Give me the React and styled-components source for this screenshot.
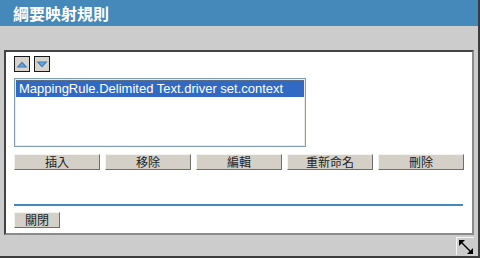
import React from "react";
import styled, { createGlobalStyle } from "styled-components";

const GlobalStyle = createGlobalStyle`
  html, body {
    margin: 0;
    padding: 0;
    background: #cccccc;
  }
  * {
    box-sizing: border-box;
  }
`;

const Window = styled.div`
  width: 480px;
  height: 258px;
  display: flex;
  flex-direction: column;
  background: #cccccc;
  border-right: 2px solid #3c3c3c;
  border-bottom: 2px solid #3c3c3c;
  font-family: "Liberation Sans", "Noto Sans CJK TC", sans-serif;
`;

const Header = styled.div`
  height: 26px;
  flex: none;
  background: #4589ba;
  color: #fff;
  font-family: "Noto Sans CJK TC", sans-serif;
  font-weight: bold;
  font-size: 16px;
  line-height: 26px;
  padding-left: 13px;
`;

const Body = styled.div`
  flex: 1;
  display: flex;
  flex-direction: column;
  padding: 24px 4px 0 4px;
`;

const Panel = styled.div`
  width: 470px;
  height: 185px;
  background: #fff;
  border-top: 2px solid #444;
  border-left: 2px solid #444;
  border-right: 2px solid #8a8a8a;
  border-bottom: 2px solid #8a8a8a;
  padding: 4px 8px 4px 8px;
  display: flex;
  flex-direction: column;
`;

const ArrowRow = styled.div`
  display: flex;
  gap: 4px;
`;

const ArrowButton = styled.div`
  width: 16px;
  height: 16px;
  border: 1px solid #1a1a1a;
  background: #d6d3cc;
  display: flex;
  align-items: center;
  justify-content: center;
`;

const ListBox = styled.div`
  margin-top: 6px;
  width: 292px;
  height: 69px;
  border: 1px solid #7f9db9;
  padding: 1px;
  box-shadow: inset 0 0 0 1px #ecebe6;
`;

const Option = styled.div`
  height: 17px;
  line-height: 16px;
  padding-left: 3px;
  font-size: 13px;
  color: ${(p) => (p.$selected ? "#fff" : "#000")};
  background: ${(p) => (p.$selected ? "#316ac5" : "transparent")};
  border-top: 1px solid ${(p) => (p.$selected ? "#5a6e88" : "transparent")};
  white-space: nowrap;
`;

const ButtonRow = styled.div`
  margin-top: 7px;
  display: flex;
  gap: 5px;
`;

const Button = styled.div`
  width: ${(p) => p.$width || 86}px;
  height: 16px;
  background: #d4d0c8;
  border-top: 1px solid #f4f3ee;
  border-left: 1px solid #f4f3ee;
  border-right: 1px solid #6e6e6e;
  border-bottom: 1px solid #6e6e6e;
  font-family: "Noto Sans CJK TC", sans-serif;
  font-size: 12px;
  line-height: 14px;
  color: #222;
  text-align: center;
`;

const Divider = styled.div`
  margin-top: 34px;
  width: 449px;
  height: 2px;
  background: #4589ba;
`;

const CloseRow = styled.div`
  margin-top: 6px;
  display: flex;
`;

const Footer = styled.div`
  display: flex;
  justify-content: flex-end;
  padding: 2px 0 0 0;
`;

const ResizeGrip = styled.div`
  width: 18px;
  height: 18px;
  border-top: 1px solid #f4f4f4;
  border-left: 1px solid #f4f4f4;
  display: flex;
  align-items: center;
  justify-content: center;
`;

const UpIcon = () => (
  <svg width="12" height="7" viewBox="0 0 12 7">
    <polygon points="6,0.5 11.5,6.5 0.5,6.5" fill="#3d7ab8" />
    <polygon points="6,2 9,5.5 3,5.5" fill="#6fa3d6" />
  </svg>
);

const DownIcon = () => (
  <svg width="12" height="7" viewBox="0 0 12 7">
    <polygon points="0.5,0.5 11.5,0.5 6,6.5" fill="#3d7ab8" />
    <polygon points="3,1.5 9,1.5 6,5" fill="#6fa3d6" />
  </svg>
);

const ResizeIcon = () => (
  <svg width="16" height="16" viewBox="0 0 16 16">
    <line x1="3" y1="3" x2="13" y2="13" stroke="#000" strokeWidth="1.4" />
    <polygon points="1,1 7,1 1,7" fill="#000" />
    <polygon points="15,15 9,15 15,9" fill="#000" />
  </svg>
);

const actions = ["插入", "移除", "編輯", "重新命名", "刪除"];

const App = () => {
  return (
    <Window>
      <GlobalStyle />
      <Header>綱要映射規則</Header>
      <Body>
        <Panel>
          <ArrowRow>
            <ArrowButton>
              <UpIcon />
            </ArrowButton>
            <ArrowButton>
              <DownIcon />
            </ArrowButton>
          </ArrowRow>
          <ListBox>
            <Option $selected>MappingRule.Delimited Text.driver set.context</Option>
          </ListBox>
          <ButtonRow>
            {actions.map((a) => (
              <Button key={a}>{a}</Button>
            ))}
          </ButtonRow>
          <Divider />
          <CloseRow>
            <Button $width={46}>關閉</Button>
          </CloseRow>
        </Panel>
        <Footer>
          <ResizeGrip>
            <ResizeIcon />
          </ResizeGrip>
        </Footer>
      </Body>
    </Window>
  );
};

export default App;
